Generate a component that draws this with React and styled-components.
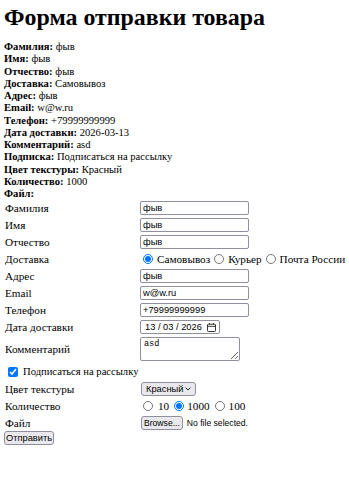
import React from "react";
import styled, { createGlobalStyle } from "styled-components";

const serif = `"Liberation Serif", "Times New Roman", serif`;
const sans = `"Liberation Sans", Arial, sans-serif`;

const Global = createGlobalStyle`
  html, body { margin: 0; padding: 0; background: #fff; }
  body { font-family: ${serif}; color: #000; }
`;

const Page = styled.div`
  padding: 4px 4px 0 4px;
  font-family: ${serif};
  font-size: 11.2px;
  color: #000;
`;

const Title = styled.h1`
  margin: 0 0 11px 0;
  font-family: ${serif};
  font-size: 23.9px;
  line-height: 26px;
  font-weight: 700;
`;

const Info = styled.div`
  font-family: ${serif};
  font-size: 10.6px;
  line-height: 12.25px;
`;

const InfoLine = styled.div``;

const InfoKey = styled.span`
  font-weight: 700;
`;

const Form = styled.form`
  margin-top: 1px;
  display: grid;
  grid-template-columns: 136px 1fr;
  row-gap: 3px;
  align-items: center;
`;

const Label = styled.label`
  line-height: 13px;
  padding-left: 1px;
`;

const TextInput = styled.input`
  box-sizing: border-box;
  width: 109px;
  height: 14px;
  padding: 0 2px;
  border: 1px solid #8f8f9d;
  border-radius: 2px;
  font-family: ${sans};
  font-size: 9.3px;
  color: #000;
  background: #fff;
  outline: none;
  margin: 0;
`;

const Group = styled.div`
  display: flex;
  align-items: center;
  gap: ${(p) => p.$gap || 1}px;
  height: 14px;
  white-space: nowrap;
`;

const Option = styled.label`
  display: inline-flex;
  align-items: center;
  line-height: 13px;
`;

const Radio = styled.input`
  width: 10px;
  height: 10px;
  margin: 0 ${(p) => p.$mr || 4}px 0 3px;
  accent-color: #0075ff;
`;

const DateBox = styled.div`
  box-sizing: border-box;
  width: 80px;
  height: 14px;
  border: 1px solid #8f8f9d;
  border-radius: 2px;
  display: flex;
  align-items: center;
  justify-content: space-between;
  padding: 0 3px 0 4px;
  font-family: ${sans};
  font-size: 9.3px;
`;

const TextArea = styled.textarea`
  box-sizing: border-box;
  width: 100px;
  height: 24px;
  border: 1px solid #8f8f9d;
  border-radius: 2px;
  padding: 1px 3px;
  font-family: "Liberation Mono", "DejaVu Sans Mono", monospace;
  font-size: 8.5px;
  margin: 0;
  outline: none;
`;

const CheckRow = styled.label`
  grid-column: 1 / span 2;
  display: flex;
  align-items: center;
  height: 15px;
  line-height: 13px;
  font-size: 10.6px;
`;

const Check = styled.input`
  width: 10px;
  height: 10px;
  margin: 0 5px 0 4px;
  accent-color: #0075ff;
`;

const SelectWrap = styled.div`
  position: relative;
  display: inline-flex;
  width: 56px;
`;

const Select = styled.select`
  appearance: none;
  box-sizing: border-box;
  width: 55px;
  height: 14px;
  margin: 0 0 0 1px;
  padding: 0 0 0 4px;
  border: 1px solid #8f8f9d;
  border-radius: 3px;
  background: #e9e9ed;
  font-family: ${sans};
  font-size: 9.3px;
  color: #000;
  outline: none;
`;

const Chevron = styled.svg`
  position: absolute;
  right: 5px;
  top: 5px;
  pointer-events: none;
`;

const FileRow = styled.div`
  display: flex;
  align-items: center;
  gap: 4px;
  height: 14px;
`;

const HiddenFile = styled.input`
  display: none;
`;

const Btn = styled.button`
  box-sizing: border-box;
  height: 14px;
  padding: 0 2px;
  margin: 0 0 0 ${(p) => p.$ml || 0}px;
  border: 1px solid #8f8f9d;
  border-radius: 3px;
  background: #e9e9ed;
  font-family: ${sans};
  font-size: ${(p) => p.$fs || 9.3}px;
  line-height: 12px;
  color: #000;
  cursor: default;
`;

const FileName = styled.span`
  font-family: ${sans};
  font-size: 8.6px;
`;

const Submit = styled(Btn)`
  margin-top: 1px;
  display: block;
  width: 50px;
  padding: 0;
`;

const CalendarIcon = () => (
  <svg width="9" height="9" viewBox="0 0 9 9" fill="none" stroke="#222" strokeWidth="0.9">
    <rect x="0.5" y="1.2" width="8" height="7.3" rx="0.8" />
    <line x1="0.5" y1="3.3" x2="8.5" y2="3.3" />
    <line x1="2.5" y1="0.2" x2="2.5" y2="1.6" />
    <line x1="6.5" y1="0.2" x2="6.5" y2="1.6" />
  </svg>
);

const info = [
  ["Фамилия:", "фыв"],
  ["Имя:", "фыв"],
  ["Отчество:", "фыв"],
  ["Доставка:", "Самовывоз"],
  ["Адрес:", "фыв"],
  ["Email:", "w@w.ru"],
  ["Телефон:", "+79999999999"],
  ["Дата доставки:", "2026-03-13"],
  ["Комментарий:", "asd"],
  ["Подписка:", "Подписаться на рассылку"],
  ["Цвет текстуры:", "Красный"],
  ["Количество:", "1000"],
  ["Файл:", ""],
];

export default function App() {
  return (
    <>
      <Global />
      <Page>
        <Title>Форма отправки товара</Title>
        <Info>
          {info.map(([k, v]) => (
            <InfoLine key={k}>
              <InfoKey>{k}</InfoKey> {v}
            </InfoLine>
          ))}
        </Info>
        <Form onSubmit={(e) => e.preventDefault()}>
          <Label>Фамилия</Label>
          <TextInput defaultValue="фыв" />
          <Label>Имя</Label>
          <TextInput defaultValue="фыв" />
          <Label>Отчество</Label>
          <TextInput defaultValue="фыв" />
          <Label>Доставка</Label>
          <Group>
            <Option><Radio type="radio" name="d" defaultChecked />Самовывоз</Option>
            <Option><Radio type="radio" name="d" />Курьер</Option>
            <Option><Radio type="radio" name="d" />Почта России</Option>
          </Group>
          <Label>Адрес</Label>
          <TextInput defaultValue="фыв" />
          <Label>Email</Label>
          <TextInput defaultValue="w@w.ru" />
          <Label>Телефон</Label>
          <TextInput defaultValue="+79999999999" />
          <Label>Дата доставки</Label>
          <DateBox>
            <span>13 / 03 / 2026</span>
            <CalendarIcon />
          </DateBox>
          <Label>Комментарий</Label>
          <TextArea defaultValue="asd" />
          <CheckRow>
            <Check type="checkbox" defaultChecked />
            Подписаться на рассылку
          </CheckRow>
          <Label>Цвет текстуры</Label>
          <SelectWrap>
            <Select defaultValue="red">
              <option value="red">Красный</option>
              <option value="green">Зелёный</option>
            </Select>
            <Chevron width="6" height="4" viewBox="0 0 6 4">
              <path d="M0.6 0.6 L3 3 L5.4 0.6" fill="none" stroke="#222" strokeWidth="1" />
            </Chevron>
          </SelectWrap>
          <Label>Количество</Label>
          <Group $gap={2}>
            <Option><Radio type="radio" name="q" $mr={5} />10</Option>
            <Option><Radio type="radio" name="q" $mr={3} defaultChecked />1000</Option>
            <Option><Radio type="radio" name="q" $mr={4} />100</Option>
          </Group>
          <Label>Файл</Label>
          <FileRow>
            <HiddenFile type="file" id="file" />
            <Btn type="button" $ml={1} $fs={8.6}>Browse...</Btn>
            <FileName>No file selected.</FileName>
          </FileRow>
        </Form>
        <Submit type="submit">Отправить</Submit>
      </Page>
    </>
  );
}
